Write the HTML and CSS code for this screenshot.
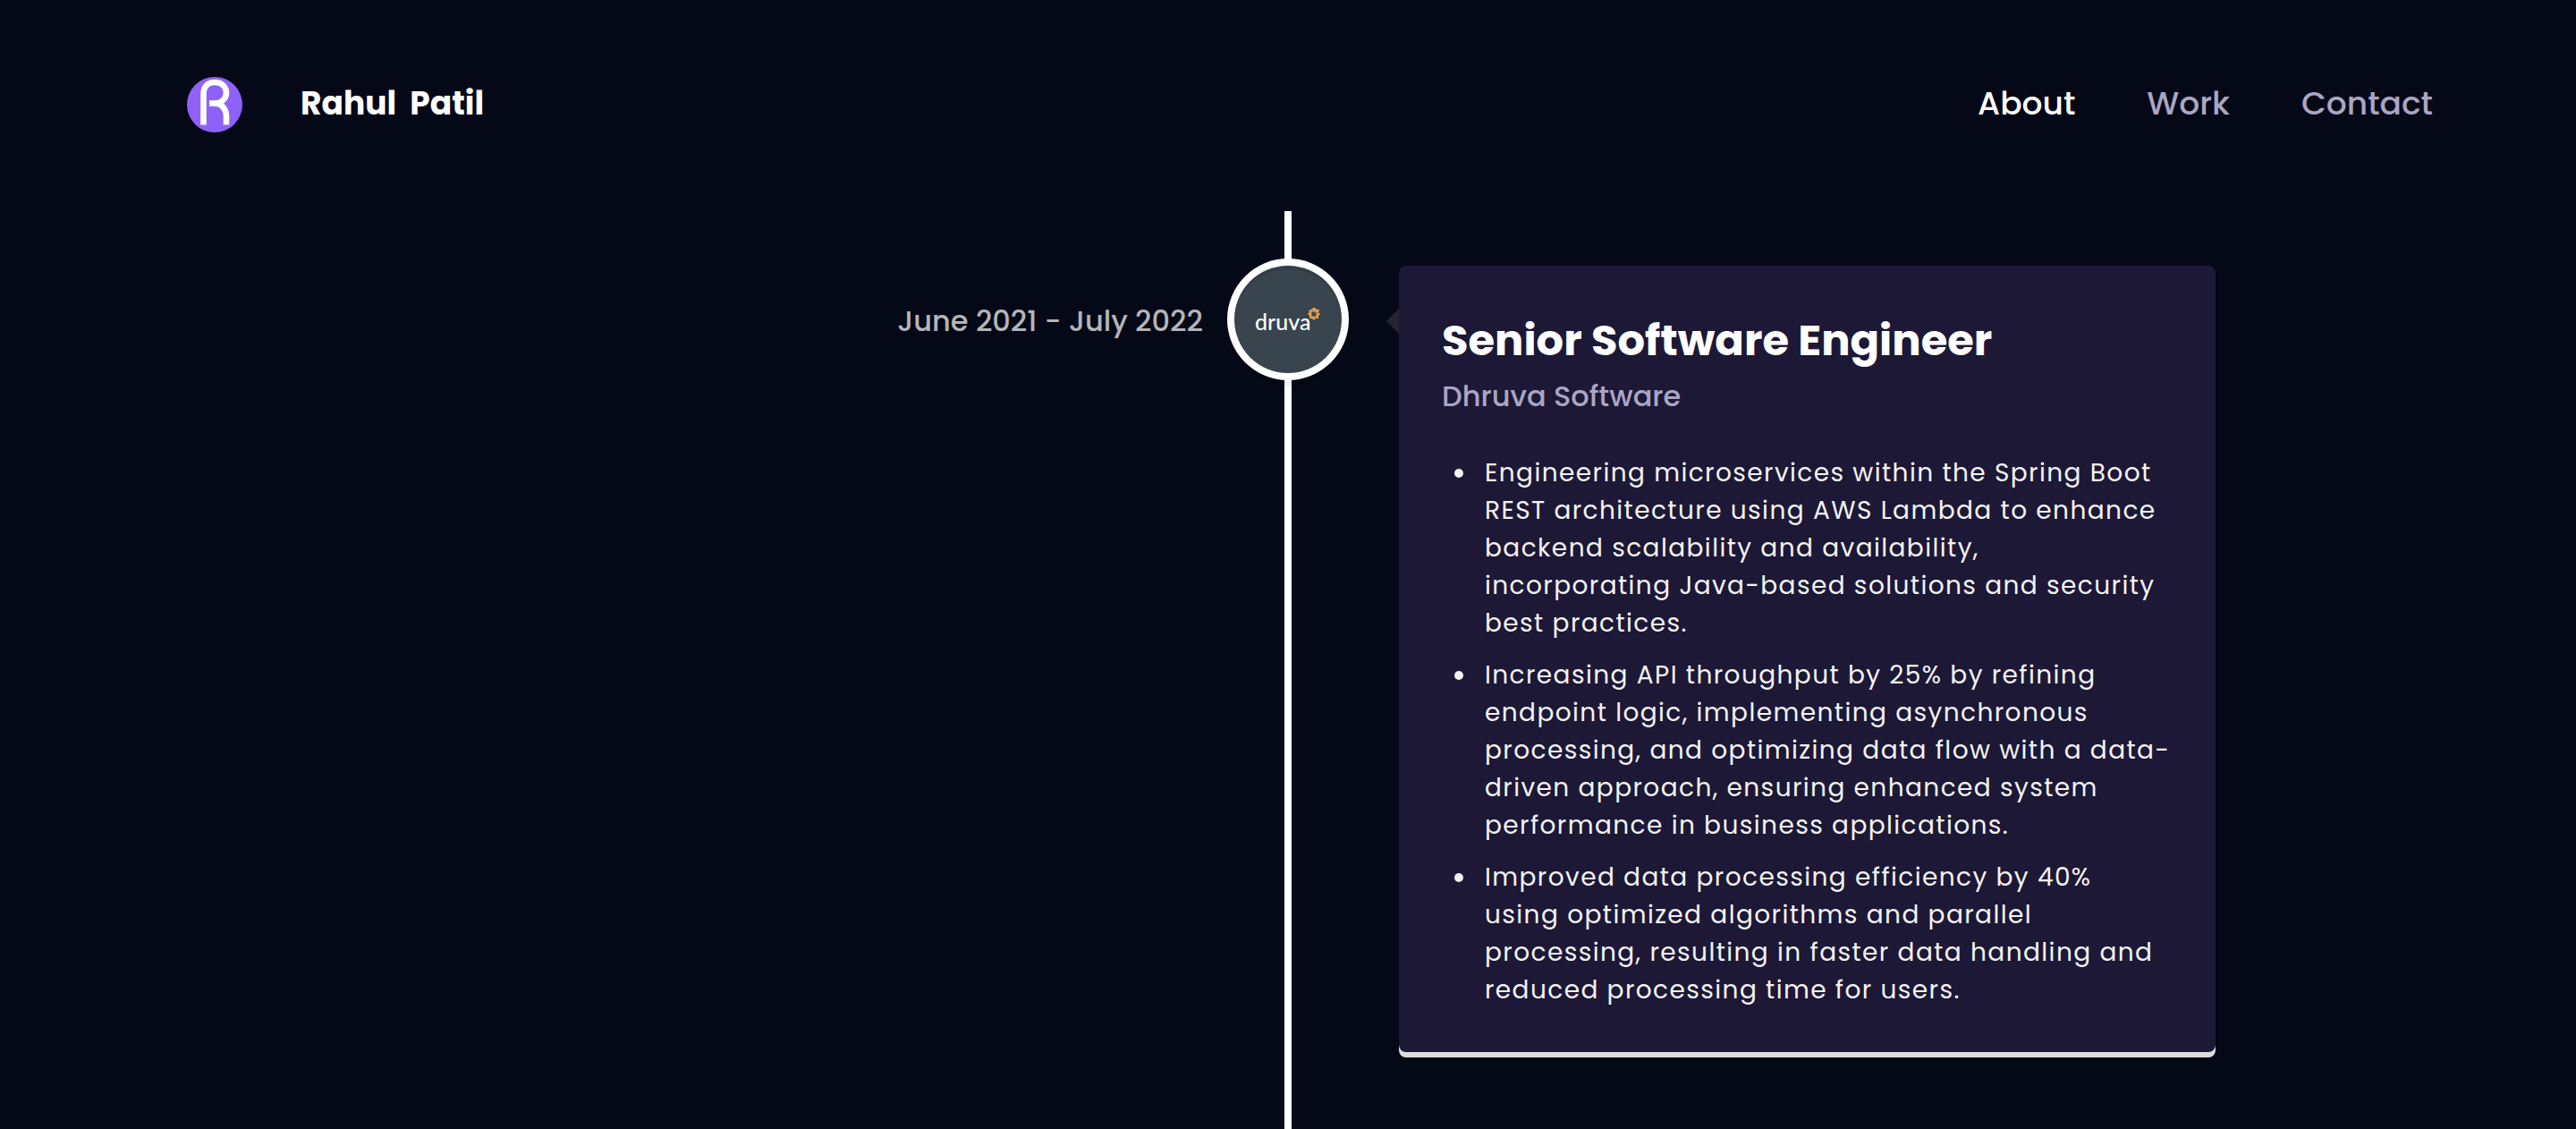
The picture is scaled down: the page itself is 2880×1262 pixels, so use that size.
FILE: index.html
```html
<!DOCTYPE html>
<html lang="en">
<head>
<meta charset="utf-8">
<meta name="viewport" content="width=device-width, initial-scale=1">
<title>Rahul Patil</title>
<link rel="stylesheet" href="styles.css">
</head>
<body>
<header class="site-header">
  <a class="brand" href="#">
    <svg class="brand-mark" viewBox="0 0 62 62" aria-hidden="true">
      <circle cx="31" cy="31" r="31" fill="#9061f9"/>
      <path d="M18.500 53.500V19C18.500 10 24 6 31 6C39 6 44 11 44 17.500C44 24.500 38.500 29.500 31 29.500H25M31 29.500C39 29.500 44 36 44 44V53.500" fill="none" stroke="#fff" stroke-width="6.600"/>
    </svg>
    <span class="brand-name">Rahul &nbsp;Patil</span>
  </a>
  <nav class="site-nav">
    <a class="nav-link nav-link-active" href="#about">About</a>
    <a class="nav-link" href="#work">Work</a>
    <a class="nav-link" href="#contact">Contact</a>
  </nav>
</header>
<main class="timeline">
  <article class="entry">
    <p class="entry-date">June 2021 - July 2022</p>
    <div class="entry-icon">
      <svg class="company-logo" viewBox="0 0 120 120" role="img" aria-label="druva">
        <text x="23" y="72" class="company-word">druva</text>
        <g transform="translate(89 54)">
          <path d="M-1 -7L1 -7L3 -5L6 -5L5 -2L7 0L5 2L5 5L2 5L0 7L-2 5L-5 5L-5 2L-7 0L-5 -2L-6 -4L-3 -5Z" fill="#e8a147"/>
          <path d="M-3 -1L0 -3L3 0L1 3L-2 2Z" fill="#38454e"/>
          <path d="M0 -3L5 -1M3 0L1 5M1 3L-4 2M-3 -1L-1 -5" stroke="#8f7449" stroke-width="1"/>
        </g>
      </svg>
    </div>
    <section class="card">
      <h3 class="card-title">Senior Software Engineer</h3>
      <p class="card-company">Dhruva Software</p>
      <ul class="card-points">
        <li>Engineering microservices within the Spring Boot REST architecture using AWS Lambda to enhance backend scalability and availability,<br>incorporating Java-based solutions and security best practices.</li>
        <li>Increasing API throughput by 25% by refining endpoint logic, implementing asynchronous processing, and optimizing data flow with a data-driven approach, ensuring enhanced system performance in business applications.</li>
        <li>Improved data processing efficiency by 40% using optimized algorithms and parallel processing, resulting in faster data handling and reduced processing time for users.</li>
      </ul>
    </section>
  </article>
</main>
</body>
</html>
```
FILE: styles.css
```css
* { box-sizing: border-box; }

body {
  margin: 0;
  min-height: 100vh;
  display: flex;
  flex-direction: column;
  background: #050816;
  color: #fff;
  font-family: Poppins, Inter, "Liberation Sans", sans-serif;
}

h3, p, ul { margin: 0; }
a { color: inherit; text-decoration: none; }

.site-header {
  display: flex;
  align-items: flex-start;
  justify-content: space-between;
  padding: 86px 160px 88px 209px;
}

.brand { display: flex; align-items: flex-start; gap: 65px; }
.brand-mark { width: 62px; height: 62px; }
.brand-name { font-size: 36px; line-height: 60px; font-weight: 700; }

.site-nav { display: flex; gap: 80px; }
.nav-link { font-size: 36px; line-height: 60px; font-weight: 500; color: #aaa6c3; }
.nav-link-active { color: #fff; }

.timeline {
  position: relative;
  flex: 1;
  padding: 61px 14% 80px;
}

.timeline::before {
  content: "";
  position: absolute;
  top: 0;
  bottom: 0;
  left: 50%;
  width: 8px;
  margin-left: -4px;
  background: #fff;
}

.entry {
  position: relative;
  display: grid;
  grid-template-columns: 1fr 136px 1fr;
  align-items: start;
}

.entry-date {
  padding: 38px 27px 0 0;
  text-align: right;
  font-size: 32px;
  line-height: 48px;
  font-weight: 500;
  color: #b4b5b9;
}

.entry-icon {
  width: 120px;
  height: 120px;
  margin: 0 auto;
  border-radius: 50%;
  background: #38454e;
  box-shadow: 0 0 0 8px #fff, inset 0 4px 0 rgba(0, 0, 0, .08), 0 6px 0 8px rgba(0, 0, 0, .05);
}

.company-logo { display: block; width: 100%; height: 100%; }
.company-word { font: 500 25px Lato, sans-serif; fill: #fff; }

.card {
  position: relative;
  margin-left: 56px;
  padding: 54px 48px 48px;
  border-radius: 8px;
  background: #1d1836;
  box-shadow: 0 6px 0 #ddd;
}

.card::before {
  content: "";
  position: absolute;
  top: 48px;
  right: 100%;
  border: 14px solid transparent;
  border-left-width: 0;
  border-right-color: #232631;
}

.card-title { font-size: 48px; line-height: 60px; font-weight: 700; }
.card-company { font-size: 32px; line-height: 64px; font-weight: 500; color: #aaa6c3; }

.card-points {
  display: grid;
  gap: 16px;
  margin-top: 33px;
  padding-left: 40px;
  font-size: 28px;
  line-height: 42px;
  letter-spacing: 0.05em;
  color: #f3f3f3;
}

.card-points li { padding-left: 8px; }
```
